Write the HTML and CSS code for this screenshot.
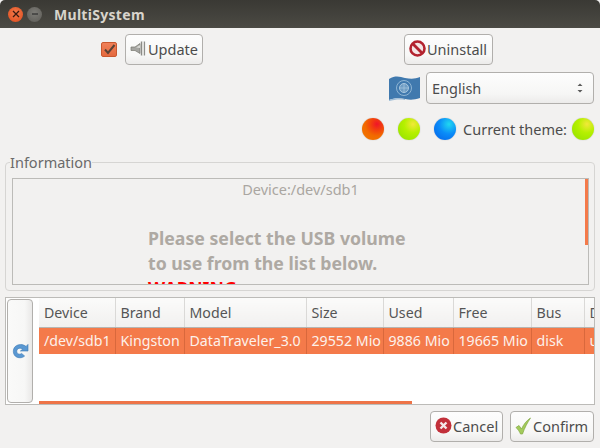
FILE: index.html
```html
<!DOCTYPE html>
<html lang="en">
<head>
    <meta charset="utf-8">
    <title>MultiSystem</title>
    <link rel="stylesheet" href="styles.css">
</head>
<body>

    <div class="titlebar">
        <span class="win-btn win-close">
            <svg width="8" height="8" viewBox="0 0 8 8"><path d="M1 1L7 7M7 1L1 7" stroke="#3a1a10" stroke-width="1.3"/></svg>
        </span>
        <span class="win-btn win-min">
            <svg width="8" height="8" viewBox="0 0 8 8"><path d="M1 4H7" stroke="#333" stroke-width="1.3"/></svg>
        </span>
        <span class="win-title">MultiSystem</span>
    </div>

    <div class="row-actions">
        <div class="update-side">
            <span class="checkbox">
                <svg width="14" height="14" viewBox="0 0 14 14"><path d="M3 6.5L6 10L12.5 2" fill="none" stroke="#5a4236" stroke-width="2"/></svg>
            </span>
            <button class="btn btn-update">
                <svg width="17" height="17" viewBox="0 0 17 17">
                    <path d="M1 7H5L10 3.5V13.5L5 10.5H1Z" fill="#a5a5a1" stroke="#77776f" stroke-width=".7"/>
                    <path d="M6 7.5L10 5V8Z" fill="#d9d9d5"/>
                    <path d="M11.5 1.5V15.5" stroke="#8b8b87" stroke-width="1.4"/>
                    <path d="M14.5 1.5V15.5" stroke="#8f8f8b" stroke-width="1.2"/>
                    <path d="M13 1.5V15.5" stroke="#dededa" stroke-width="1.6"/>
                </svg>
                Update
            </button>
        </div>
        <button class="btn btn-uninstall">
            <svg width="17" height="17" viewBox="0 0 17 17">
                <circle cx="8.5" cy="8.5" r="7" fill="#f4e6e6" stroke="#b3232f" stroke-width="2.6"/>
                <path d="M3.5 3.5L13.5 13.5" stroke="#b3232f" stroke-width="2.8"/>
            </svg>
            Uninstall
        </button>
    </div>

    <div class="row-lang">
        <svg class="flag" width="32" height="27" viewBox="0 0 32 27">
            <path d="M1 4C8 0 12 2 17 3C23 4 27 4 32 2V23C26 25 22 25 17 24C11 23 6 23 1 25Z" fill="#4079ae"/>
            <path d="M1 25C6 23 11 23 17 24L17 25C11 24 6 25 1 26Z" fill="#9fbdd6"/>
            <circle cx="16" cy="13" r="7.5" fill="none" stroke="#8fb5d4" stroke-width="1"/>
            <circle cx="16" cy="13" r="4.5" fill="#6f9dc4" stroke="#a9c7df" stroke-width="1"/>
            <path d="M16 8.5V17.5M11.5 13H20.5" stroke="#a9c7df" stroke-width=".7"/>
        </svg>
        <div class="select">
            <span>English</span>
            <svg width="8" height="14" viewBox="0 0 8 14"><path d="M1.5 5L4 2.5L6.5 5ZM1.5 9L4 11.5L6.5 9Z" fill="#5a5a5a"/></svg>
        </div>
    </div>

    <div class="row-theme">
        <span class="ball ball-red"></span>
        <span class="ball ball-green"></span>
        <span class="ball ball-blue"></span>
        <span class="theme-label">Current theme:</span>
        <span class="ball ball-current ball-green"></span>
    </div>

    <fieldset class="info-group">
        <legend>Information</legend>
        <div class="info-view">
            <p class="info-device">Device:/dev/sdb1</p>
            <div class="info-text">
                <p>Please select the USB volume<br>to use from the list below.</p>
                <p class="warning">WARNING</p>
            </div>
            <span class="info-scroll"></span>
        </div>
    </fieldset>

    <div class="device-panel">
        <button class="refresh-btn">
            <svg width="17" height="16" viewBox="0 0 17 16">
                <path d="M14 3.5C11 .8 6 1 3.2 3.6C.6 6.2 .8 11 3.4 13.2C6 15.4 10.4 15.2 12.6 13L9.6 10.4C8.4 11.4 6.6 11.4 5.6 10.4C4.4 9.2 4.4 7 5.8 5.9C7.2 4.8 9.2 5 10.6 6.2L8.4 8H16V1.4Z" fill="#5a98d2" stroke="#3a78b4" stroke-width=".6"/>
            </svg>
        </button>
        <div class="table-wrap">
            <table class="device-table">
                <thead>
                    <tr>
                        <th class="c-device">Device</th>
                        <th class="c-brand">Brand</th>
                        <th class="c-model">Model</th>
                        <th class="c-size">Size</th>
                        <th class="c-used">Used</th>
                        <th class="c-free">Free</th>
                        <th class="c-bus">Bus</th>
                        <th class="c-dev">Dev</th>
                    </tr>
                </thead>
                <tbody>
                    <tr>
                        <td>/dev/sdb1</td>
                        <td>Kingston</td>
                        <td>DataTraveler_3.0</td>
                        <td>29552 Mio</td>
                        <td>9886 Mio</td>
                        <td>19665 Mio</td>
                        <td>disk</td>
                        <td>usb</td>
                    </tr>
                </tbody>
            </table>
            <span class="table-scroll"></span>
        </div>
    </div>

    <div class="row-bottom">
        <button class="btn btn-cancel">
            <svg width="17" height="17" viewBox="0 0 17 17">
                <circle cx="8.5" cy="8.5" r="8" fill="#c2303a"/>
                <path d="M5.5 5.5L11.5 11.5M11.5 5.5L5.5 11.5" stroke="#f5e9e9" stroke-width="2.4"/>
            </svg>
            Cancel
        </button>
        <button class="btn btn-confirm">
            <svg width="17" height="18" viewBox="0 0 17 18">
                <path d="M1 10.5L4 8.5L6.5 12C8.5 7.5 11.5 3.5 15.5 1C12.5 5.5 9.5 11 7.5 17H5.5C4.5 14.5 3 12.5 1 10.5Z" fill="#a3cb5c" stroke="#7fa63f" stroke-width=".7"/>
            </svg>
            Confirm
        </button>
    </div>

</body>
</html>
```

FILE: styles.css
```css
* {
    margin: 0;
    padding: 0;
    box-sizing: border-box;
}

body {
    width: 600px;
    height: 448px;
    overflow: hidden;
    font-family: 'Noto Sans', sans-serif;
    font-size: 14px;
    color: #4c4c4c;
    background-color: #f2f1f0;
}

.titlebar {
    display: flex;
    align-items: center;
    height: 28px;
    padding-left: 8px;
    background: linear-gradient(#3a3934, #4b4a44);
    border-radius: 5px 5px 0 0;
}

.win-btn {
    display: flex;
    align-items: center;
    justify-content: center;
    width: 15px;
    height: 15px;
    margin-right: 4px;
    border-radius: 50%;
}

.win-close {
    background: radial-gradient(circle at 50% 40%, #f47a4a, #dc4a1c);
}

.win-min {
    background: radial-gradient(circle at 50% 40%, #7d7c77, #5c5b56);
}

.win-title {
    margin-left: 8px;
    font-size: 14px;
    font-weight: 700;
    color: #d8d4cc;
    letter-spacing: .3px;
}

.btn {
    display: inline-flex;
    align-items: center;
    gap: 1px;
    height: 31px;
    font-family: inherit;
    font-size: 14.5px;
    color: #4c4c4c;
    background: linear-gradient(#fdfdfd, #f7f7f6 70%, #ecebea);
    border: 1px solid #b1afac;
    border-radius: 4px;
    padding: 0 3px 2px 4px;
}

.row-actions {
    display: flex;
    padding: 6px 107px 0 101px;
    justify-content: space-between;
}

.update-side {
    display: flex;
    align-items: center;
    gap: 8px;
}

.checkbox {
    display: flex;
    width: 16px;
    height: 15px;
    background: linear-gradient(#f08058, #e4693e);
    border: 1px solid #c9582f;
    border-radius: 2px;
}

.btn-update {
    width: 78px;
}

.btn-uninstall {
    width: 89px;
}

.row-lang {
    display: flex;
    align-items: center;
    justify-content: flex-end;
    gap: 6px;
    margin-top: 7px;
    padding-right: 6px;
}

.select {
    display: flex;
    align-items: center;
    justify-content: space-between;
    width: 168px;
    height: 32px;
    padding: 0 9px 0 5px;
    font-size: 14.5px;
    background: linear-gradient(#fdfdfd, #f6f6f5 70%, #ecebea);
    border: 1px solid #b1afac;
    border-radius: 4px;
}

.row-theme {
    display: flex;
    align-items: center;
    justify-content: flex-end;
    margin-top: 14px;
    padding-right: 6px;
}

.ball {
    width: 22px;
    height: 22px;
    margin-left: 14px;
    border-radius: 50%;
    box-shadow: 0 0 1px #999;
}

.ball-current {
    margin-left: 0;
}

.ball-red {
    background: radial-gradient(circle at 68% 28%, #f0142a 0, #f23c10 25%, #f26a00 55%, #ee7a00 100%);
}

.ball-green {
    background: radial-gradient(circle at 68% 28%, #f2e83a 0, #b6f000 40%, #8fe000 100%);
}

.ball-blue {
    background: radial-gradient(circle at 68% 28%, #20d8f0 0, #0a8cf8 45%, #0460e8 100%);
}

.theme-label {
    margin: 0 5px 0 7px;
    font-size: 14.5px;
    white-space: nowrap;
}

.info-group {
    height: 137px;
    margin: 14px 5px 0 5px;
    padding: 0 5px 5px 6px;
    border: 1px solid #d6d5d3;
    border-radius: 4px;
}

.info-group legend {
    margin-left: -2px;
    font-size: 14.5px;
    line-height: 17px;
    color: #6a6a6a;
}

.info-view {
    position: relative;
    height: 107px;
    margin-top: 7px;
    overflow: hidden;
    border: 1px solid #bcbbb8;
}

.info-device {
    font-size: 14.5px;
    line-height: 21px;
    text-align: center;
    color: #aaa6a1;
    margin-bottom: 26px;
}

.info-text {
    padding-left: 135px;
    font-size: 17.7px;
    font-weight: 700;
    line-height: 25px;
    color: #aea9a3;
}

.warning {
    color: #f00;
}

.info-scroll {
    position: absolute;
    top: 0;
    right: 0;
    width: 3px;
    height: 66px;
    background: #f47a4a;
}

.device-panel {
    display: flex;
    height: 108px;
    margin: 6px 5px 0;
    background: #fff;
    border: 1px solid #bcbbb8;
}

.refresh-btn {
    flex: none;
    display: flex;
    align-items: center;
    justify-content: center;
    width: 26px;
    height: 104px;
    margin: 1px 6px 0 1px;
    background: linear-gradient(90deg, #fafaf9, #f7f7f6 70%, #e9e8e7);
    border: 1px solid #b1afac;
    border-radius: 4px;
}

.table-wrap {
    position: relative;
    flex: 1;
    overflow: hidden;
}

.device-table {
    width: 588px;
    table-layout: fixed;
    border-collapse: collapse;
    font-size: 14.2px;
}

.device-table th {
    height: 29px;
    padding-left: 5px;
    font-weight: 400;
    text-align: left;
    white-space: nowrap;
    color: #555;
    background: linear-gradient(#fbfbfa, #f1f0ef);
    border-right: 1px solid #dad9d7;
    border-bottom: 1px solid #b6b5b2;
}

.device-table td {
    height: 27px;
    padding-left: 5px;
    white-space: nowrap;
    overflow: hidden;
    color: #fdf1ea;
    background: #f47a4a;
    border-right: 1px solid #d9683c;
}

.c-device { width: 76px; }
.c-brand { width: 69px; }
.c-model { width: 122px; }
.c-size { width: 77px; }
.c-used { width: 70px; }
.c-free { width: 78px; }
.c-bus { width: 53px; }
.c-dev { width: 43px; }

.table-scroll {
    position: absolute;
    left: 0;
    bottom: 0;
    width: 373px;
    height: 3px;
    background: #ee7448;
}

.row-bottom {
    display: flex;
    justify-content: flex-end;
    gap: 7px;
    margin-top: 6px;
    padding-right: 6px;
}

.btn-cancel {
    width: 73px;
}

.btn-confirm {
    width: 84px;
    gap: 1px;
}
```
